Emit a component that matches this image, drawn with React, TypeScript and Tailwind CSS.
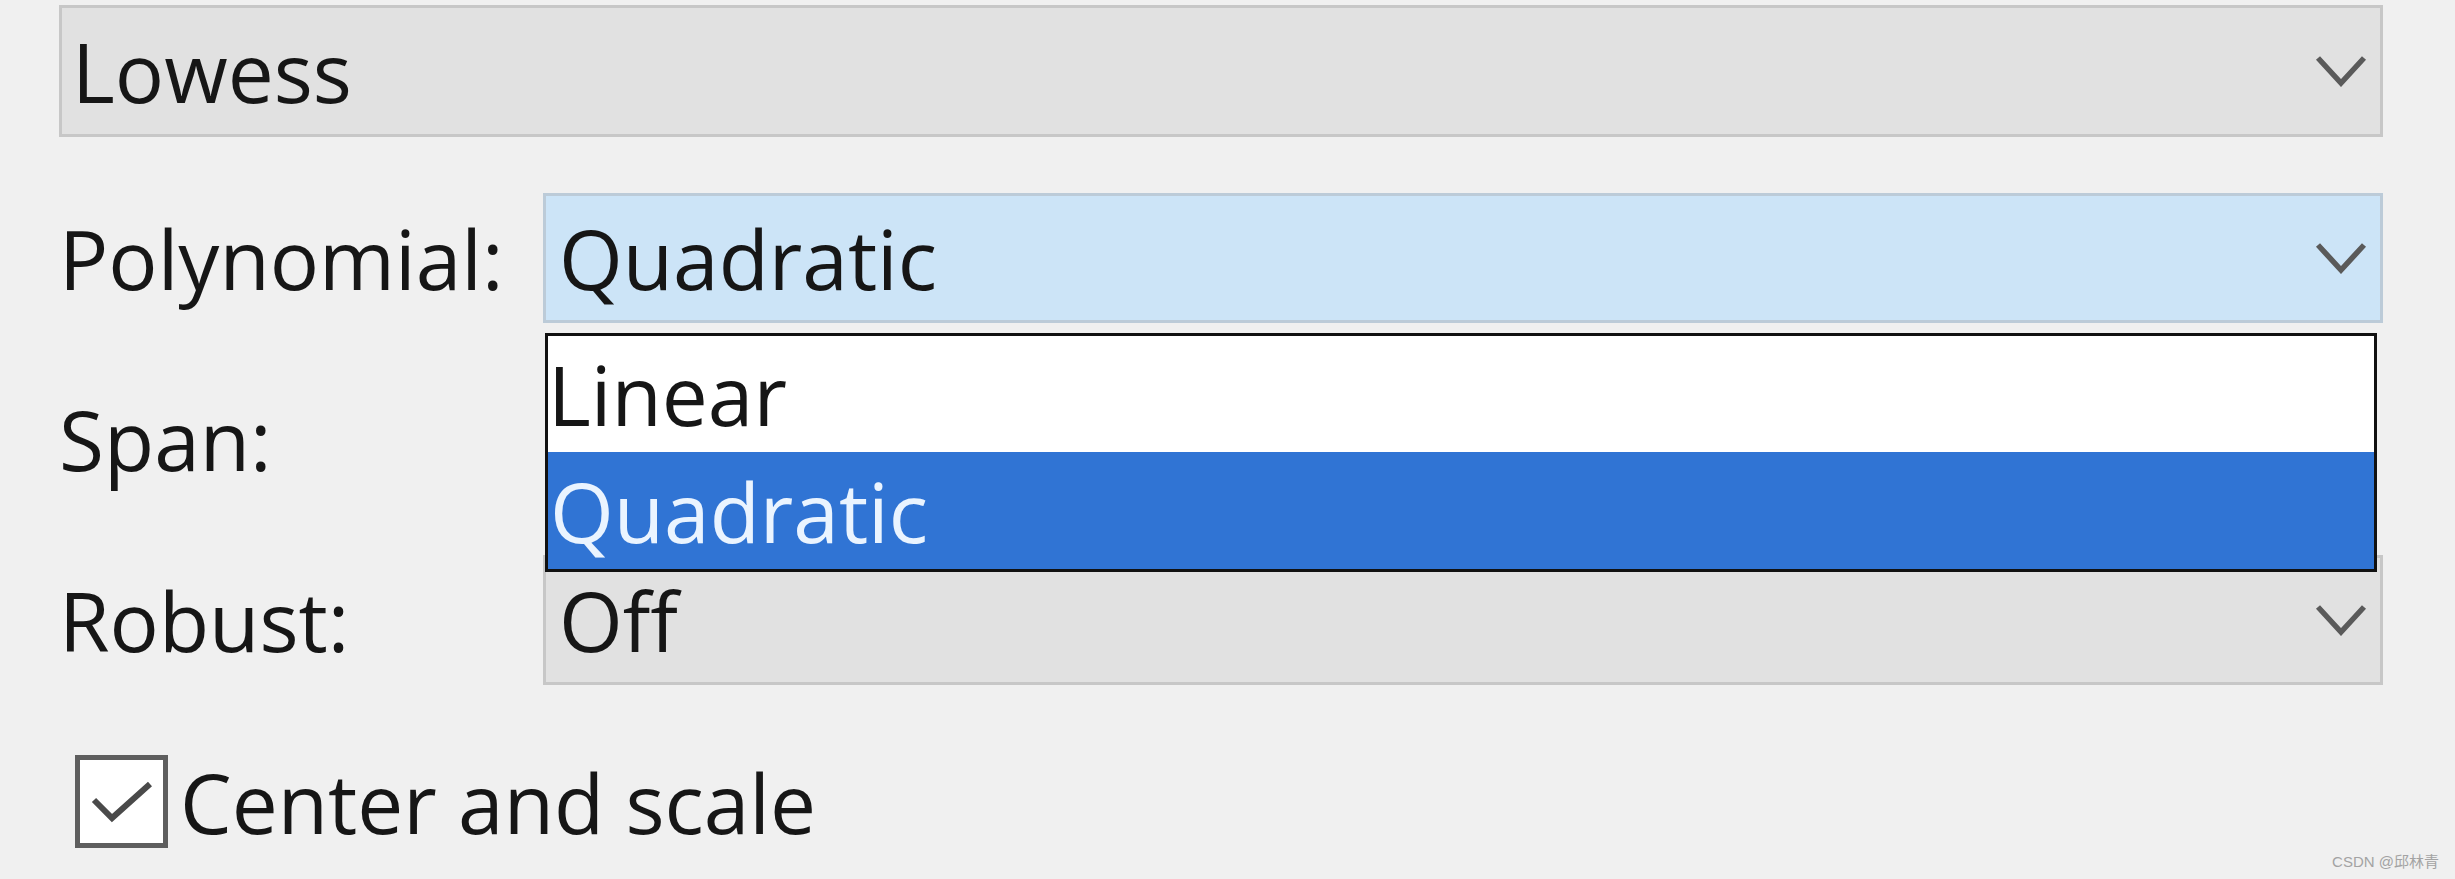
import React from "react";

const font = { fontFamily: '"Open Sans", "Noto Sans", sans-serif' };

const Chevron = () => (
  <svg width="52" height="32" viewBox="0 0 52 32" className="shrink-0">
    <path d="M3 3 L26 28 L49 3" fill="none" stroke="#5a5a5a" strokeWidth="5.5" strokeLinejoin="miter" />
  </svg>
);

interface ComboProps {
  value: string;
  active?: boolean;
  className?: string;
}

const Combo = ({ value, active, className }: ComboProps) => (
  <div
    className={
      "flex h-[130px] items-center justify-between border-[3px] pr-[13px] " +
      (active ? "border-[#bccbd8] bg-[#cce4f7] " : "border-[#c7c7c7] bg-[#e1e1e1] ") +
      (className ?? "")
    }
  >
    <span className="text-[82px] leading-none text-[#161616]">{value}</span>
    <Chevron />
  </div>
);

const rows = [
  { label: "Polynomial:", value: "Quadratic", active: true },
  { label: "Span:", value: "" },
  { label: "Robust:", value: "Off" },
];

export default function App() {
  return (
    <div className="relative h-[879px] overflow-hidden bg-[#f0f0f0] pl-[59px] pr-[72px] pt-[5px]" style={font}>
      {/* method select */}
      <Combo value="Lowess" className="h-[132px] pl-[10px]" />

      {/* options */}
      <div className="mt-[56px] flex flex-col gap-[51px]">
        {rows.map((row) => (
          <div key={row.label} className="flex h-[130px] items-center">
            <div className="w-[484px] shrink-0 text-[82px] leading-none text-[#161616]">{row.label}</div>
            <div className="relative flex-1">
              {/* span's own control sits hidden under the open list */}
              {row.value && <Combo value={row.value} active={row.active} className="pl-[13px]" />}
              {row.active && (
                <div className="absolute left-[2px] top-[140px] z-10 flex h-[239px] w-[1832px] flex-col border-[3px] border-[#111] bg-white">
                  <div className="flex h-[116px] items-center text-[82px] leading-none text-[#161616]">Linear</div>
                  <div className="flex flex-1 items-center bg-[#3074d4] pl-[2px] text-[82px] leading-none text-[#eaf4ff]">
                    Quadratic
                  </div>
                </div>
              )}
            </div>
          </div>
        ))}
      </div>

      {/* checkbox */}
      <div className="mt-[70px] ml-[16px] flex items-center gap-[12px]">
        <div className="flex h-[93px] w-[93px] items-center justify-center border-[5px] border-[#5e5e5e] bg-white">
          <svg width="64" height="48" viewBox="0 0 64 48">
            <path d="M4 22 L22 40 L60 6" fill="none" stroke="#4a4a4a" strokeWidth="6" />
          </svg>
        </div>
        <span className="text-[82px] leading-none text-[#161616]">Center and scale</span>
      </div>

      <div
        className="absolute bottom-[6px] right-[16px] text-[15px] text-[#a3a3a3]"
        style={{ fontFamily: '"Liberation Sans", "Noto Sans CJK SC", sans-serif' }}
      >
        CSDN @邱林青
      </div>
    </div>
  );
}
